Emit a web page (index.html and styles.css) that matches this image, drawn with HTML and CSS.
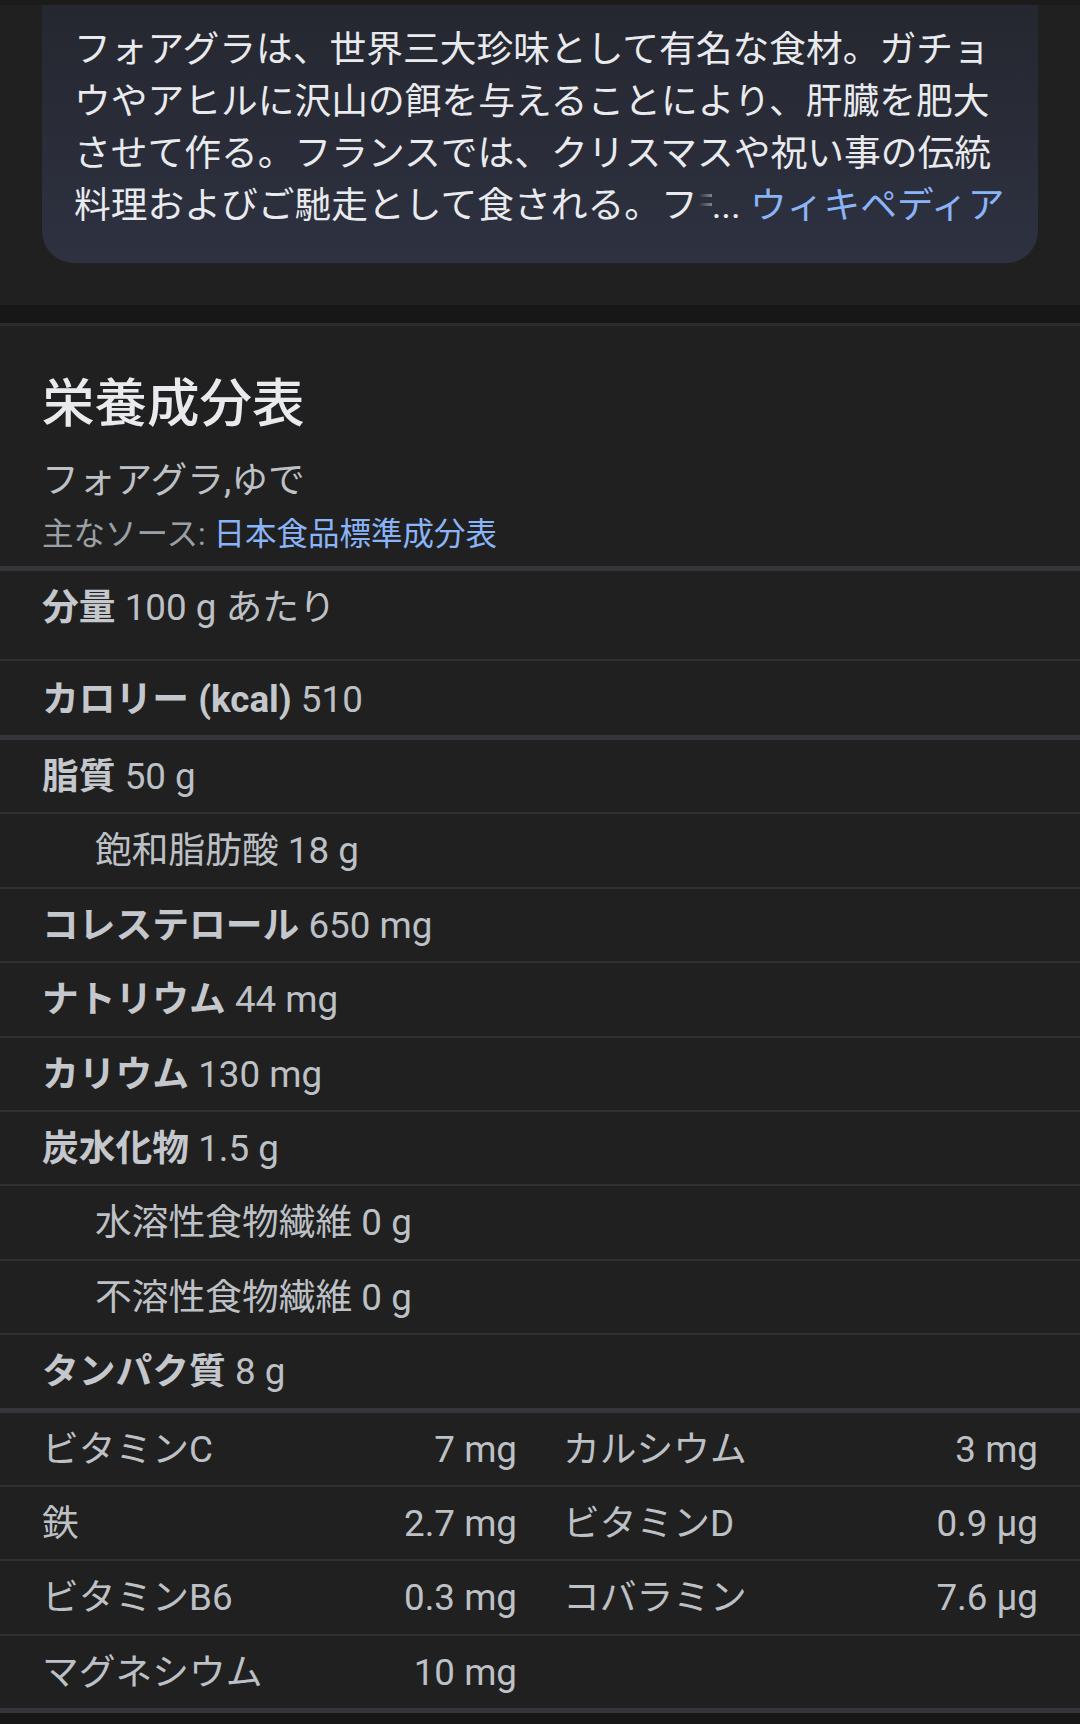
FILE: index.html
```html
<!DOCTYPE html>
<html lang="ja">
<head>
<meta charset="utf-8">
<title>栄養成分表</title>
<link rel="stylesheet" href="styles.css">
</head>
<body>
<div class="top-strip"></div>
<section class="desc">
  <div class="card">
    <p class="desc-text">フォアグラは、世界三大珍味として有名な食材。ガチョウやアヒルに沢山の餌を与えることにより、肝臓を肥大させて作る。フランスでは、クリスマスや祝い事の伝統料理およびご馳走として食される。<span class="tail">フ<span class="fade" aria-hidden="true"></span><span class="dots">...</span> <a class="link">ウィキペディア</a></span></p>
  </div>
</section>
<div class="band"></div>
<section class="nutrition">
  <header class="nut-head">
    <h2 class="nut-title">栄養成分表</h2>
    <div class="nut-food">フォアグラ,ゆで</div>
    <div class="nut-source">主なソース: <a class="link">日本食品標準成分表</a></div>
  </header>
  <div class="group">
    <div class="row row-serving"><b>分量</b> 100 g あたり</div>
    <div class="row row-cal"><b>カロリー (kcal)</b> 510</div>
  </div>
  <div class="group">
    <div class="row"><b>脂質</b> 50 g</div>
    <div class="row sub">飽和脂肪酸 18 g</div>
    <div class="row"><b>コレステロール</b> 650 mg</div>
    <div class="row"><b>ナトリウム</b> 44 mg</div>
    <div class="row"><b>カリウム</b> 130 mg</div>
    <div class="row"><b>炭水化物</b> 1.5 g</div>
    <div class="row sub">水溶性食物繊維 0 g</div>
    <div class="row sub">不溶性食物繊維 0 g</div>
    <div class="row"><b>タンパク質</b> 8 g</div>
  </div>
  <div class="group">
    <div class="row vit-row">
      <div class="vit"><span>ビタミンC</span><span>7 mg</span></div>
      <div class="vit"><span>カルシウム</span><span>3 mg</span></div>
    </div>
    <div class="row vit-row">
      <div class="vit"><span>鉄</span><span>2.7 mg</span></div>
      <div class="vit"><span>ビタミンD</span><span>0.9 µg</span></div>
    </div>
    <div class="row vit-row">
      <div class="vit"><span>ビタミンB6</span><span>0.3 mg</span></div>
      <div class="vit"><span>コバラミン</span><span>7.6 µg</span></div>
    </div>
    <div class="row vit-row">
      <div class="vit"><span>マグネシウム</span><span>10 mg</span></div>
      <div class="vit vit-empty"></div>
    </div>
  </div>
</section>
</body>
</html>
```

FILE: styles.css
```css
html, body {
  margin: 0;
  padding: 0;
}
body {
  background: #171717;
  font-family: Roboto, "Noto Sans CJK JP", sans-serif;
  color: #bdc1c6;
  width: 1080px;
  height: 1724px;
  overflow: hidden;
}
.top-strip {
  height: 5px;
  background: #1b1b1b;
}
.desc {
  background: #202020;
  padding: 0 42px 42px;
}
.card {
  background: linear-gradient(#252730, #2e3140);
  border-radius: 0 0 32px 32px;
  padding: 19px 32px 31px;
}
.desc-text {
  margin: 0;
  font-size: 36.75px;
  line-height: 52px;
  color: #e8eaed;
}
.tail {
  white-space: nowrap;
}
.fade {
  display: inline-block;
  width: 12px;
  height: 30px;
  margin-left: 2px;
  vertical-align: -4px;
  background:
    linear-gradient(to right, rgba(232, 234, 237, 0.05), rgba(232, 234, 237, 0.45)) 0 2px / 100% 3px no-repeat,
    linear-gradient(to right, rgba(232, 234, 237, 0.05), rgba(232, 234, 237, 0.45)) 0 11px / 100% 3px no-repeat;
}
.dots {
  color: #e8eaed;
}
.link {
  color: #8ab4f8;
  text-decoration: none;
}
.band {
  height: 18px;
  background: #171717;
}
.nutrition {
  background: #202020;
  border-top: 3px solid #2b2c2f;
}
.nut-head {
  padding: 46px 42px 9px;
  border-bottom: 5px solid #343639;
}
.nut-title {
  margin: 0;
  font-size: 52.5px;
  line-height: 64px;
  font-weight: 500;
  color: #e8eaed;
}
.nut-food {
  margin-top: 19px;
  font-size: 36.75px;
  line-height: 52px;
  color: #bdc1c6;
}
.nut-source {
  margin-top: 6px;
  font-size: 31.5px;
  line-height: 44px;
  color: #9aa0a6;
}
.group + .group {
  border-top: 5px solid #343639;
}
.group:last-child {
  border-bottom: 5px solid #343639;
}
.row {
  padding: 11px 42px 9.4px;
  font-size: 36.75px;
  line-height: 52px;
  color: #bdc1c6;
}
.row + .row {
  border-top: 2px solid #2f3033;
}
.row b {
  font-weight: 700;
  color: #c4c7cc;
}
.row-serving {
  padding-top: 11px;
  padding-bottom: 25px;
}
.row-cal {
  padding-top: 13px;
  padding-bottom: 9px;
}
.sub {
  padding-left: 95px;
}
.vit-row {
  display: grid;
  grid-template-columns: 1fr 1fr;
  column-gap: 46px;
}
.vit {
  display: flex;
  justify-content: space-between;
}
```
